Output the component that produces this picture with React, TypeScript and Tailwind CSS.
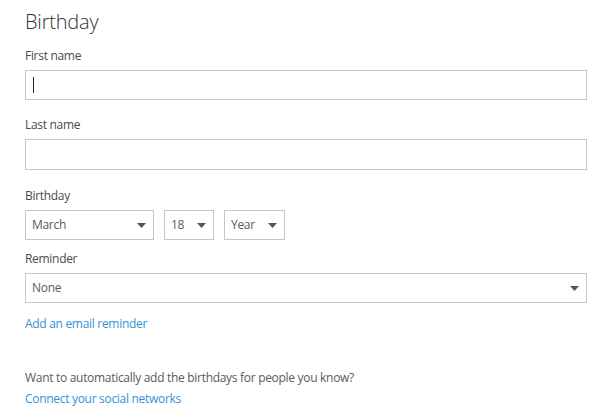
import React from "react";

function Caret() {
  return (
    <svg width="9" height="5" viewBox="0 0 9 5" className="shrink-0">
      <path d="M0 0h9L4.5 5z" fill="#555" />
    </svg>
  );
}

function SelectBox({ value, className }: { value: string; className: string }) {
  return (
    <div
      className={`flex h-[30px] items-center justify-between border border-[#c6c6c6] bg-white pl-[6px] pr-[7px] text-[12px] tracking-[-0.3px] text-[#5a5a5a] ${className}`}
    >
      <span>{value}</span>
      <Caret />
    </div>
  );
}

export default function App() {
  return (
    <div
      className="h-[416px] w-[606px] bg-white pl-[25px] pr-[19px] pt-[8px] text-[12px] tracking-[-0.3px] text-[#4a4a4a]"
      style={{ fontFamily: '"Open Sans", "Noto Sans", sans-serif' }}
    >
      <h1 className="text-[20px] font-light leading-[28px] tracking-[-0.2px] text-[#333]">Birthday</h1>

      <label className="mt-[12px] block leading-[16px]">First name</label>
      <div className="mt-[6px] flex h-[30px] items-center border border-[#c6c6c6] pl-[7px]">
        <span className="h-[16px] w-px bg-[#222]" />
      </div>

      <label className="mt-[17px] block leading-[16px]">Last name</label>
      <div className="mt-[6px] h-[31px] border border-[#c6c6c6]" />

      <label className="mt-[18px] block leading-[16px]">Birthday</label>
      <div className="mt-[6px] flex gap-[10px]">
        <SelectBox value="March" className="w-[129px]" />
        <SelectBox value="18" className="w-[50px]" />
        <SelectBox value="Year" className="w-[61px]" />
      </div>

      <label className="mt-[11px] block leading-[16px]">Reminder</label>
      <SelectBox value="None" className="mt-[6px] w-full" />

      <a className="mt-[12px] block leading-[18px] text-[#3392d6]">Add an email reminder</a>

      <p className="mt-[36px] leading-[18px] text-[#5a5a5a]">
        Want to automatically add the birthdays for people you know?
      </p>
      <a className="mt-[3px] block leading-[18px] text-[#3392d6]">Connect your social networks</a>
    </div>
  );
}
